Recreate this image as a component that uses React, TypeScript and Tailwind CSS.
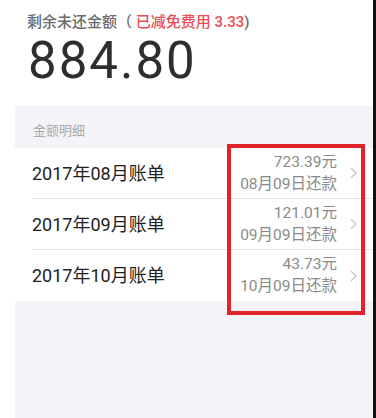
import React from "react";

const rows = [
  { title: "2017年08月账单", amount: "723.39元", date: "08月09日还款" },
  { title: "2017年09月账单", amount: "121.01元", date: "09月09日还款" },
  { title: "2017年10月账单", amount: "43.73元", date: "10月09日还款" },
];

const font = { fontFamily: 'Roboto, "Noto Sans CJK SC", sans-serif' };

export default function App() {
  return (
    <div className="w-[376px] h-[418px] bg-white flex overflow-hidden" style={font}>
      <div className="flex-1 flex flex-col pl-[15px]">
        <div className="h-[106px] pl-[12px] pt-[12px] flex flex-col">
          <div className="text-[15px] leading-[20px] font-medium text-[#6b6b6b]">
            剩余未还金额（ <span className="text-[#ec4d57]">已减免费用 3.33</span>)
          </div>
          <div className="text-[51px] leading-[60px] tracking-[2px] mt-[-1px] text-[#2e2e2e] pl-[1px]">884.80</div>
        </div>
        <div className="flex-1 bg-[#f4f4f8] relative">
          <div className="h-[42px] pl-[18px] pt-[17px] text-[13px] leading-[16px] text-[#a9a9a9]">金额明细</div>
          <div className="bg-white">
            {rows.map((r, i) => (
              <div key={r.title} className="pl-[17px]">
                <div
                  className={
                    "h-[51px] flex items-center pr-[16px] " +
                    (i < rows.length - 1 ? "border-b border-[#e8e8e8]" : "")
                  }
                >
                  <div className="flex-1 text-[18px] text-[#222222]">{r.title}</div>
                  <div className="flex flex-col items-end text-[15.5px] leading-[22px] text-[#8a8a8a] mt-[-1px]">
                    <div>{r.amount}</div>
                    <div>{r.date}</div>
                  </div>
                  <svg width="7" height="12" viewBox="0 0 7 12" className="ml-[13px]">
                    <path d="M1 1 L6 6 L1 11" fill="none" stroke="#c4c4c4" strokeWidth="1.3" />
                  </svg>
                </div>
              </div>
            ))}
          </div>
          <div className="absolute left-[212px] top-[38px] w-[138px] h-[171px] border-[4px] border-[#e2232b]" />
        </div>
      </div>
      <div className="w-[3px] bg-[#111111]" />
    </div>
  );
}
